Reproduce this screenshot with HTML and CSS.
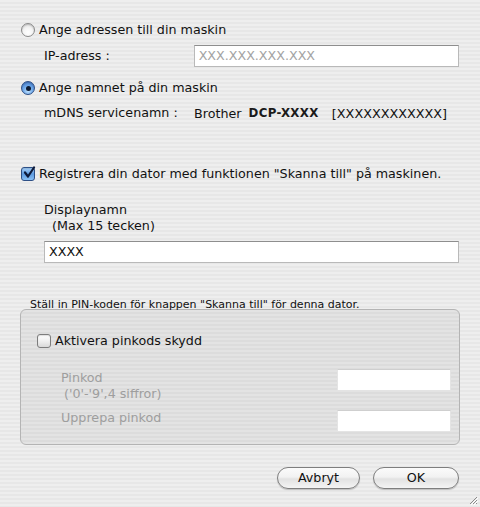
FILE: index.html
```html
<!DOCTYPE html>
<html lang="sv">
<head>
<meta charset="utf-8">
<title>Skanna till</title>
<link rel="stylesheet" href="styles.css">
</head>
<body>
<div class="dialog">
  <div class="opt">
    <span class="radio"></span>
    <span class="opt-label">Ange adressen till din maskin</span>
  </div>
  <div class="field ip-row">
    <span class="field-label">IP-adress :</span>
    <div class="input ip-input placeholder">XXX.XXX.XXX.XXX</div>
  </div>
  <div class="opt opt2">
    <span class="radio on"><span class="dot"></span></span>
    <span class="opt-label">Ange namnet på din maskin</span>
  </div>
  <div class="field mdns-row">
    <span class="field-label mdns-label">mDNS servicenamn :</span>
    <span class="brother">Brother</span>
    <span class="model">DCP-XXXX</span>
    <span class="serial">[XXXXXXXXXXXX]</span>
  </div>

  <div class="opt reg-row">
    <span class="check on">
      <svg width="14" height="14" viewBox="0 0 14 14"><path d="M3 6.5 L6 10.5 L12 1.5" fill="none" stroke="#0d1a3a" stroke-width="2.2" stroke-linecap="round" stroke-linejoin="round"/></svg>
    </span>
    <span class="opt-label">Registrera din dator med funktionen "Skanna till" på maskinen.</span>
  </div>
  <div class="disp">
    <div class="disp-title">Displaynamn</div>
    <div class="disp-sub">(Max 15 tecken)</div>
    <div class="input disp-input">XXXX</div>
  </div>

  <div class="caption">Ställ in PIN-koden för knappen "Skanna till" för denna dator.</div>
  <div class="group">
    <div class="opt">
      <span class="check"></span>
      <span class="opt-label">Aktivera pinkods skydd</span>
    </div>
    <div class="pin-row pin1">
      <div class="pin-labels">
        <div class="dim">Pinkod</div>
        <div class="dim sub">('0'-'9',4 siffror)</div>
      </div>
      <div class="input pin-input"></div>
    </div>
    <div class="pin-row pin2">
      <div class="pin-labels">
        <div class="dim">Upprepa pinkod</div>
      </div>
      <div class="input pin-input"></div>
    </div>
  </div>

  <div class="buttons">
    <div class="btn cancel">Avbryt</div>
    <div class="btn ok">OK</div>
  </div>
  <svg class="grip" width="10" height="10" viewBox="0 0 10 10">
    <path d="M9 2 L2 9 M9 5 L5 9 M9 8 L8 9" stroke="#8a8a8a" stroke-width="1"/>
    <path d="M10 3 L3 10 M10 6 L6 10" stroke="#ffffff" stroke-width="1"/>
  </svg>
</div>
</body>
</html>
```
FILE: styles.css
```css
html, body {
  margin: 0;
  padding: 0;
}
body {
  width: 480px;
  height: 507px;
  overflow: hidden;
  font-family: "DejaVu Sans", "Liberation Sans", sans-serif;
  font-size: 12.7px;
  color: #111;
  background: repeating-linear-gradient(180deg, #eeeeee 0, #eeeeee 2px, #e7e7e7 2px, #e7e7e7 4px);
}
.dialog {
  position: relative;
  height: 507px;
  box-sizing: border-box;
  padding: 22px 21px 0 21px;
}
.opt {
  display: flex;
  align-items: center;
  height: 16px;
  gap: 4px;
}
.opt-label {
  line-height: 16px;
  white-space: nowrap;
}
.radio {
  width: 14px;
  height: 14px;
  box-sizing: border-box;
  border-radius: 50%;
  border: 1px solid #8a8a8a;
  background: radial-gradient(circle at 50% 70%, #ffffff 0, #f4f4f4 45%, #cfcfcf 100%);
  box-shadow: inset 0 1px 1px rgba(0,0,0,0.15);
  display: flex;
  align-items: center;
  justify-content: center;
  flex: none;
}
.radio.on {
  border-color: #2d4f86;
  background: radial-gradient(circle at 50% 75%, #bfe1ff 0, #6fa8e8 45%, #3b6fc0 100%);
}
.dot {
  width: 5px;
  height: 5px;
  border-radius: 50%;
  background: #0d1a30;
}
.check {
  width: 14px;
  height: 14px;
  box-sizing: border-box;
  border: 1px solid #7d7d7d;
  border-radius: 3px;
  background: linear-gradient(180deg, #fdfdfd 0, #f0f0f0 50%, #d9d9d9 100%);
  box-shadow: inset 0 1px 1px rgba(0,0,0,0.12);
  flex: none;
  position: relative;
}
.check.on {
  border-color: #2d4f86;
  background: linear-gradient(180deg, #a8d2fb 0, #5d9ae0 50%, #89c0f5 100%);
}
.check svg {
  position: absolute;
  left: 0;
  top: -2px;
}
.field {
  display: flex;
  align-items: center;
  padding-left: 23px;
}
.field-label {
  line-height: 16px;
  white-space: nowrap;
}
.ip-row {
  margin-top: 7px;
  height: 22px;
}
.ip-row .field-label {
  width: 150px;
}
.input {
  box-sizing: border-box;
  height: 22px;
  background: #ffffff;
  border: 1px solid #b9b9b9;
  border-top-color: #8e8e8e;
  line-height: 20px;
  padding-left: 4px;
  white-space: nowrap;
}
.ip-input {
  width: 266px;
  margin-left: auto;
}
.placeholder {
  color: #a3a3a3;
  font-size: 12.7px;
}
.opt2 {
  margin-top: 13px;
}
.mdns-row {
  margin-top: 9px;
  height: 16px;
}
.mdns-label {
  width: 150px;
}
.brother {
  margin-right: 7px;
}
.model {
  font-weight: bold;
  font-size: 11.8px;
  letter-spacing: 0.4px;
  color: #1a1a1a;
  margin-right: 13px;
}
.serial {
  font-size: 12.8px;
}
.reg-row {
  margin-top: 45px;
}
.disp {
  padding-left: 23px;
  margin-top: 20px;
}
.disp-title, .disp-sub {
  line-height: 16px;
}
.disp-sub {
  padding-left: 8px;
}
.disp-input {
  margin-top: 7px;
  width: 415px;
  color: #111;
}
.caption {
  margin-top: 36px;
  padding-left: 9px;
  font-size: 11px;
  line-height: 12px;
  white-space: nowrap;
}
.group {
  margin-top: -2px;
  margin-left: -1px;
  width: 440px;
  height: 136px;
  box-sizing: border-box;
  border: 1px solid #b4b4b4;
  border-radius: 6px;
  background: repeating-linear-gradient(180deg, #e3e3e3 0, #e3e3e3 2px, #dcdcdc 2px, #dcdcdc 4px);
  padding: 23px 8px 0 16px;
}
.pin-row {
  display: flex;
  align-items: flex-start;
  padding-left: 24px;
}
.pin1 {
  margin-top: 20px;
}
.pin2 {
  margin-top: 8px;
}
.pin-labels {
  flex: 1;
}
.dim {
  color: #9e9e9e;
  line-height: 16px;
  white-space: nowrap;
}
.pin1 .pin-labels {
  margin-top: 1px;
}
.pin2 .pin-labels {
  margin-top: 0;
}
.sub {
  padding-left: 3px;
}
.pin-input {
  width: 114px;
  border-color: #e4e4e4;
  border-top-color: #cfcfcf;
}
.buttons {
  display: flex;
  justify-content: flex-end;
  gap: 13px;
  margin-top: 22px;
}
.btn {
  box-sizing: border-box;
  height: 22px;
  border-radius: 11px;
  border: 1px solid #7e7e7e;
  background: linear-gradient(180deg, #fbfbfb 0, #f2f2f2 45%, #e2e2e2 55%, #f4f4f4 100%);
  box-shadow: 0 1px 1px rgba(0,0,0,0.2);
  text-align: center;
  line-height: 20px;
  font-size: 12.7px;
}
.cancel {
  width: 83px;
}
.ok {
  width: 86px;
}
.grip {
  position: absolute;
  right: 2px;
  bottom: 2px;
}
```
